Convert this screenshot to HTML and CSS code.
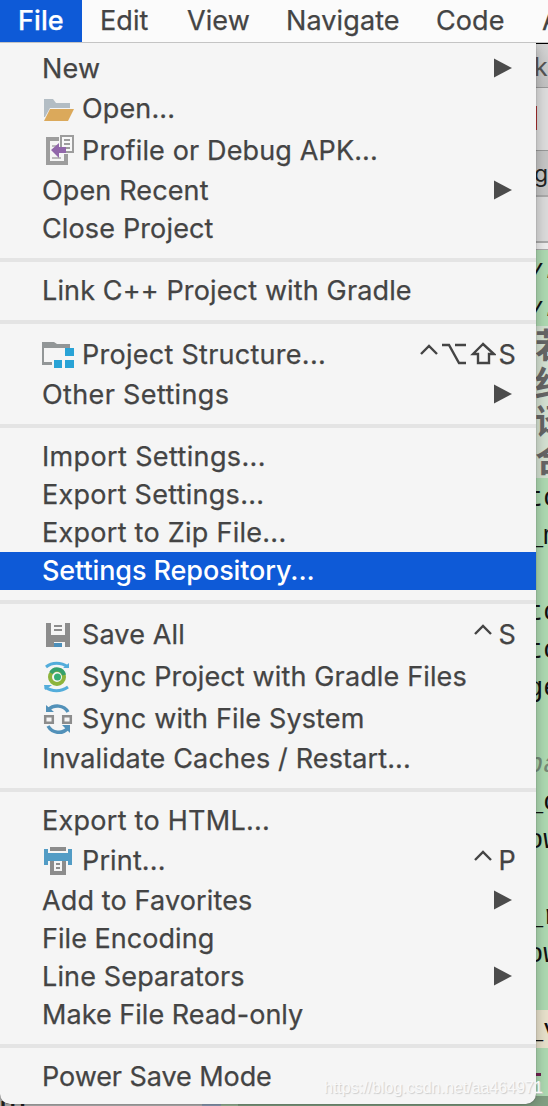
FILE: index.html
```
<!DOCTYPE html>
<html lang="en">
<head>
<meta charset="utf-8">
<title>File menu</title>
<link rel="stylesheet" href="styles.css">
</head>
<body>
<div class="screen">
  <div class="backdrop">
    <div class="strip">
      <div class="black"></div>
      <div class="title">k</div>
      <div class="toolbar"><i class="red"></i></div>
      <div class="tab">g</div>
      <div class="crumbs"></div>
      <div class="gap"></div>
      <div class="code it">y.</div>
      <div class="code it">y.</div>
      <div class="code cjk">若</div>
      <div class="code cjk">结</div>
      <div class="code cjk">译</div>
      <div class="code cjk">合</div>
      <div class="code">to</div>
      <div class="code">_m</div>
      <div class="code"></div>
      <div class="code">to</div>
      <div class="code">to</div>
      <div class="code">ge</div>
      <div class="code"></div>
      <div class="code comment">pa</div>
      <div class="code">_c</div>
      <div class="code">ow</div>
      <div class="code"></div>
      <div class="code">_r</div>
      <div class="code">ow</div>
      <div class="code"></div>
      <div class="code cream">_v</div>
      <div class="code last"><i class="dash"></i></div>
    </div>
    <div class="bottom"><i class="b1"></i><i class="b2"></i><i class="b3"></i></div>
    <div class="status">ITEI</div>
  </div>

  <nav class="bar">
    <span class="tabitem active">File</span>
    <span class="tabitem edit">Edit</span>
    <span class="tabitem view">View</span>
    <span class="tabitem nav">Navigate</span>
    <span class="tabitem codem">Code</span>
    <span class="tabitem an">A</span>
  </nav>

  <div class="menu">
    <div class="row"><span class="t">New</span><svg class="arrow" viewBox="0 0 18 20"><path d="M0 0.5L18 10L0 19.5Z"/></svg></div>
    <div class="row tall">
      <svg class="icon" viewBox="0 0 32 32"><path fill="#b3bdc4" d="M2 6h9l3 4h14v5H8L3 24H2z"/><path fill="#dba95b" d="M8 16h24l-6 12H2z"/></svg>
      <span class="t">Open...</span></div>
    <div class="row tall">
      <svg class="icon" viewBox="0 0 32 32"><path fill="#9d9d9d" d="M4 2h13v4H8v20h14v-7h4v11H4z"/><path fill="#9d9d9d" d="M18 0h14v18H18z"/><path fill="#f8f8f8" d="M20 2h10v14H20z"/><path stroke="#9d9d9d" stroke-width="2" d="M22 5h6M22 9h6M22 13h6"/><path stroke="#bbb" stroke-width="2" d="M10 11h7M10 23h9"/><path fill="#9167aa" d="M9 15l8-7v4h7v6h-7v5z"/></svg>
      <span class="t">Profile or Debug APK...</span></div>
    <div class="row"><span class="t">Open Recent</span><svg class="arrow" viewBox="0 0 18 20"><path d="M0 0.5L18 10L0 19.5Z"/></svg></div>
    <div class="row"><span class="t">Close Project</span></div>
    <div class="sep"></div>
    <div class="row"><span class="t">Link C++ Project with Gradle</span></div>
    <div class="sep"></div>
    <div class="row tall">
      <svg class="icon" viewBox="0 0 32 32"><path fill="#929697" d="M0 3h12l3 2h13v4H2v14h8v3H0z"/><path fill="#29a3d6" d="M23 9h9v8h-9zM12 21h8v8h-8zM23 21h9v8h-9z"/></svg>
      <span class="t wide">Project Structure...</span>
      <span class="keys"><svg class="mods" viewBox="0 0 76 24"><path d="M1 12l8-8 8 8M22 3h7l10 18h7M35 3h11M63 2L53 12h5v9h11v-9h5z"/></svg><b>S</b></span></div>
    <div class="row"><span class="t wider">Other Settings</span><svg class="arrow" viewBox="0 0 18 20"><path d="M0 0.5L18 10L0 19.5Z"/></svg></div>
    <div class="sep"></div>
    <div class="row"><span class="t wider">Import Settings...</span></div>
    <div class="row"><span class="t wide">Export Settings...</span></div>
    <div class="row"><span class="t wide">Export to Zip File...</span></div>
    <div class="row selected"><span class="t">Settings Repository...</span></div>
    <div class="sep"></div>
    <div class="row tall">
      <svg class="icon" viewBox="0 0 32 32"><path fill="#8c8c8c" d="M4 4h5v12h14V4h5v24h-5v-5H12v5H4z"/><path stroke="#8c8c8c" stroke-width="2" d="M12 7h8M12 11h8"/><path fill="#4c8fba" d="M12 24h8v4h-8z"/></svg>
      <span class="t">Save All</span>
      <span class="keys"><svg class="ctl" viewBox="0 0 18 24"><path d="M1 12l8-8 8 8"/></svg><b>S</b></span></div>
    <div class="row tall">
      <svg class="icon" viewBox="0 0 32 32"><g fill="none"><path stroke="#53addb" stroke-width="3" d="M4 6C10 1 19 1 26 6M3 26c7 5 16 5 23 0"/><circle cx="15" cy="16" r="7" stroke="#8db43c" stroke-width="4"/><path stroke="#35a06c" stroke-width="4" d="M9 12a7 7 0 0 1 13 2"/></g><circle cx="15.500" cy="16" r="3.500" fill="#35ae75"/><path fill="#53addb" d="M21 7h6V2zM2 24h8l-7 5z"/></svg>
      <span class="t">Sync Project with Gradle Files</span></div>
    <div class="row tall">
      <svg class="icon" viewBox="0 0 32 32"><g fill="none"><path stroke="#5291b9" stroke-width="3.500" d="M6 7C12 1 22 2 26 9M6 23c4 7 14 9 20 2"/><path stroke="#8c8c8c" stroke-width="2.500" d="M3.200 13.200h7.600v6.600H3.200zM21.200 13.200h7.600v6.600h-7.600z"/></g><path fill="#5291b9" d="M4 2v7h8zM28 30v-8h-8z"/></svg>
      <span class="t">Sync with File System</span></div>
    <div class="row"><span class="t">Invalidate Caches / Restart...</span></div>
    <div class="sep"></div>
    <div class="row"><span class="t wide">Export to HTML...</span></div>
    <div class="row tall">
      <svg class="icon" viewBox="0 0 32 32"><path fill="#8c8c8c" d="M8 2h16v4H8z"/><path fill="#529cc5" d="M2 4h4v4h20V4h4v16h-4v-4H6v4H2z"/><path fill="#8c8c8c" d="M8 16h4v10h8V16h4v14H8z"/><path stroke="#8c8c8c" stroke-width="2" d="M14 19h4M14 23h4"/></svg>
      <span class="t">Print...</span>
      <span class="keys"><svg class="ctl" viewBox="0 0 18 24"><path d="M1 12l8-8 8 8"/></svg><b>P</b></span></div>
    <div class="row"><span class="t">Add to Favorites</span><svg class="arrow" viewBox="0 0 18 20"><path d="M0 0.5L18 10L0 19.5Z"/></svg></div>
    <div class="row"><span class="t flat">File Encoding</span></div>
    <div class="row"><span class="t">Line Separators</span><svg class="arrow" viewBox="0 0 18 20"><path d="M0 0.5L18 10L0 19.5Z"/></svg></div>
    <div class="row"><span class="t flat">Make File Read-only</span></div>
    <div class="sep"></div>
    <div class="row"><span class="t tight">Power Save Mode</span></div>
  </div>
  <div class="watermark">https://blog.csdn.net/aa464971</div>
</div>
</body>
</html>
```
FILE: styles.css
```
* { box-sizing: border-box; }
body { margin: 0; font-family: Inter, "Liberation Sans", sans-serif; color: #444; }
.screen { position: relative; width: 548px; height: 1106px; overflow: hidden; background: #bbb; }

/* Editor window behind the menu */
.backdrop { position: absolute; inset: 0; }
.strip { position: absolute; left: 535px; top: 42px; width: 13px; overflow: hidden; display: flex; flex-direction: column; }
.black { height: 2px; background: #000; }
.title { height: 44px; background: linear-gradient(#d5d5d5, #c2c2c2); border-bottom: 1px solid #999; font-size: 25px; line-height: 46px; color: #555; text-indent: -1px; }
.toolbar { height: 63px; background: #dedede; border-bottom: 1px solid #999; padding-top: 18px; }
.red { display: block; width: 2px; height: 24px; background: #b03030; }
.tab { height: 46px; background: #c6c6c6; border-bottom: 2px solid #aaa; font-size: 23px; line-height: 46px; color: #222; text-indent: -1px; }
.crumbs { height: 46px; background: #dcdcdc; border-bottom: 2px solid #aaa; }
.gap { height: 7px; background: #eee; border-bottom: 1px solid #aaa; }
.code { height: 38px; background: #aedab2; font: 27px/43px "Liberation Mono", monospace; color: #111; white-space: nowrap; text-indent: -8px; flex: none; }
.it { font-style: italic; text-indent: -9px; }
.cjk { background: #d5e2d3; font: bold 34px/36px "Noto Sans CJK SC", sans-serif; color: #666; text-indent: 0; overflow: hidden; }
.comment { color: #758b77; font-style: italic; }
.cream { background: #e9e2cc; }
.last { height: 48px; padding-top: 25px; }
.dash { display: block; width: 6px; height: 3px; background: #702050; }
.bottom { position: absolute; left: 0; right: 0; bottom: 0; height: 10px; display: flex; background: #829f83; }
.b1 { width: 202px; background: #b7b7b7; }
.b2 { width: 19px; background: #8fa0b8; }
.b3 { width: 17px; background: #9dbb9c; }
.status { position: absolute; left: 0; top: 1097px; font: bold 22px/24px "Liberation Sans", sans-serif; color: #222; width: 30px; overflow: hidden; }

/* Menu bar */
.bar { position: relative; z-index: 1; display: flex; height: 43px; background: #fbfbfb; border-bottom: 1px solid #c4c4c4; font-size: 27px; line-height: 42px; white-space: nowrap; overflow: hidden; -webkit-text-stroke: .25px; letter-spacing: .1px; }
.tabitem { flex: none; }
.active { background: #0e5ad7; color: #fff; width: 82px; padding-left: 18px; font-weight: 500; }
.edit { width: 105px; padding-left: 18px; }
.view { width: 99px; }
.nav { width: 150px; }
.codem { width: 106px; }

/* Drop-down */
.menu { position: relative; width: 536px; height: 1061px; padding-top: 7px; background: #f5f5f5; border-radius: 0 0 10px 10px; box-shadow: 0 2px 14px rgba(0,0,0,.28), 0 0 1px rgba(0,0,0,.65); }
.row { display: flex; align-items: center; height: 38px; padding: 0 20px 0 42px; font-size: 27px; line-height: 36px; white-space: nowrap; letter-spacing: .14px; -webkit-text-stroke: .25px; }
.tall { height: 42px; }
.wide { letter-spacing: .27px; }
.wider { letter-spacing: .36px; }
.flat { letter-spacing: .04px; }
.tight { letter-spacing: -.07px; }
.icon { width: 32px; height: 32px; margin-right: 8px; flex: none; }
.arrow { width: 18px; height: 20px; margin: 0 4px 0 auto; fill: #4b4b4b; position: relative; top: -1px; }
.selected { background: #0e5ad7; color: #fff; font-weight: 500; letter-spacing: -.1px; -webkit-text-stroke: 0; }
.sep { height: 24px; border: solid #f5f5f5; border-width: 10px 0; background: #e4e4e4; }
.keys { display: flex; align-items: center; margin-left: auto; gap: 3px; }
.keys b { font-weight: 400; }
.keys svg { fill: none; stroke: #444; stroke-width: 2.4; height: 24px; position: relative; top: -1px; }
.mods { width: 76px; }
.ctl { width: 18px; margin-right: 4px; }
.watermark { position: absolute; left: 324px; top: 1079px; font: 16px/18px "Liberation Sans", sans-serif; color: #f9f9f9; text-shadow: 1px 1px 1px #ccc; white-space: nowrap; }
```
